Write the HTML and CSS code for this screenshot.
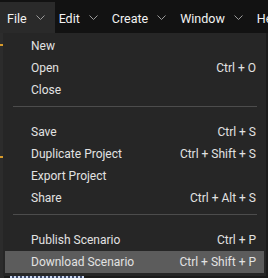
FILE: index.html
```html
<!DOCTYPE html>
<html lang="en">
<head>
    <meta charset="UTF-8">
    <meta name="viewport" content="width=device-width, initial-scale=1.0">
    <title>File menu</title>
    <link rel="stylesheet" href="styles.css">
</head>
<body>
    <div class="app">
        <nav class="menubar">
            <div class="menubar-item active">File <svg class="chevron" viewBox="0 0 9 6"><polyline points="0.5,0.5 4.5,4.5 8.5,0.5"/></svg></div>
            <div class="menubar-item">Edit <svg class="chevron" viewBox="0 0 9 6"><polyline points="0.5,0.5 4.5,4.5 8.5,0.5"/></svg></div>
            <div class="menubar-item">Create <svg class="chevron" viewBox="0 0 9 6"><polyline points="0.5,0.5 4.5,4.5 8.5,0.5"/></svg></div>
            <div class="menubar-item">Window <svg class="chevron" viewBox="0 0 9 6"><polyline points="0.5,0.5 4.5,4.5 8.5,0.5"/></svg></div>
            <div class="menubar-item">Help <svg class="chevron" viewBox="0 0 9 6"><polyline points="0.5,0.5 4.5,4.5 8.5,0.5"/></svg></div>
        </nav>

        <div class="workspace">
            <div class="side-strip">
                <span class="mark"></span>
                <span class="mark low"></span>
            </div>
            <div class="canvas">
                <div class="canvas-label"></div>
            </div>
        </div>

        <!-- open dropdown for "File" -->
        <div class="dropdown">
            <div class="dropdown-row"><span>New</span></div>
            <div class="dropdown-row"><span>Open</span><span class="shortcut">Ctrl + O</span></div>
            <div class="dropdown-row"><span>Close</span></div>
            <div class="separator"></div>
            <div class="dropdown-row"><span>Save</span><span class="shortcut">Ctrl + S</span></div>
            <div class="dropdown-row"><span>Duplicate Project</span><span class="shortcut">Ctrl + Shift + S</span></div>
            <div class="dropdown-row"><span>Export Project</span></div>
            <div class="dropdown-row"><span>Share</span><span class="shortcut">Ctrl + Alt + S</span></div>
            <div class="separator"></div>
            <div class="dropdown-row"><span>Publish Scenario</span><span class="shortcut">Ctrl + P</span></div>
            <div class="dropdown-row hover"><span>Download Scenario</span><span class="shortcut">Ctrl + Shift + P</span></div>
        </div>
    </div>
</body>
</html>
```

FILE: styles.css
```css
* {
    margin: 0;
    padding: 0;
    box-sizing: border-box;
}

body {
    font-family: Roboto, 'Liberation Sans', sans-serif;
    background: #1b1b1b;
    color: #e6e6e6;
    width: 268px;
    height: 278px;
    overflow: hidden;
}

.app {
    position: relative;
    height: 278px;
    display: flex;
    flex-direction: column;
}

/* top bar */
.menubar {
    display: flex;
    align-items: stretch;
    flex-shrink: 0;
    height: 33px;
    padding-top: 2px;
    background: #121212;
    white-space: nowrap;
    overflow: hidden;
}

.menubar-item {
    display: flex;
    align-items: center;
    flex-shrink: 0;
    gap: 9px;
    padding: 1px 10px 0 4px;
    font-size: 12.5px;
    color: #f2f2f2;
}

.menubar-item:first-child {
    padding-left: 7px;
}

.menubar-item.active {
    background: #2a2a2a;
}

.chevron {
    width: 9px;
    height: 6px;
    fill: none;
    stroke: #9a9a9a;
    stroke-width: 1;
}

/* stuff behind the menu */
.workspace {
    flex: 1;
    display: flex;
}

.side-strip {
    width: 4px;
    background: #2c2c2c;
}

.mark {
    display: block;
    margin-top: 11px;
    height: 2px;
    background: #d79a2a;
}

.mark.low {
    margin-top: 110px;
}

.canvas {
    flex: 1;
    display: flex;
    align-items: flex-end;
    padding-left: 6px;
}

.canvas-label {
    width: 74px;
    height: 2px;
    background: repeating-linear-gradient(90deg, #c9d6f0 0 2px, #3d4a6a 2px 4px);
}

/* dropdown */
.dropdown {
    position: absolute;
    left: 3px;
    top: 33px;
    width: 263px;
    padding: 2px 2px 3px;
    background: #262626;
    font-size: 12px;
}

.dropdown-row {
    display: flex;
    align-items: center;
    justify-content: space-between;
    height: 22px;
    padding: 0 8px 0 26px;
    color: #e2e2e2;
    white-space: nowrap;
}

.dropdown-row.hover {
    background: #5c5c5c;
}

.shortcut {
    color: #e2e2e2;
}

.separator {
    height: 1px;
    margin: 5px 7px 14px 8px;
    background: #4c4c4c;
}
```
